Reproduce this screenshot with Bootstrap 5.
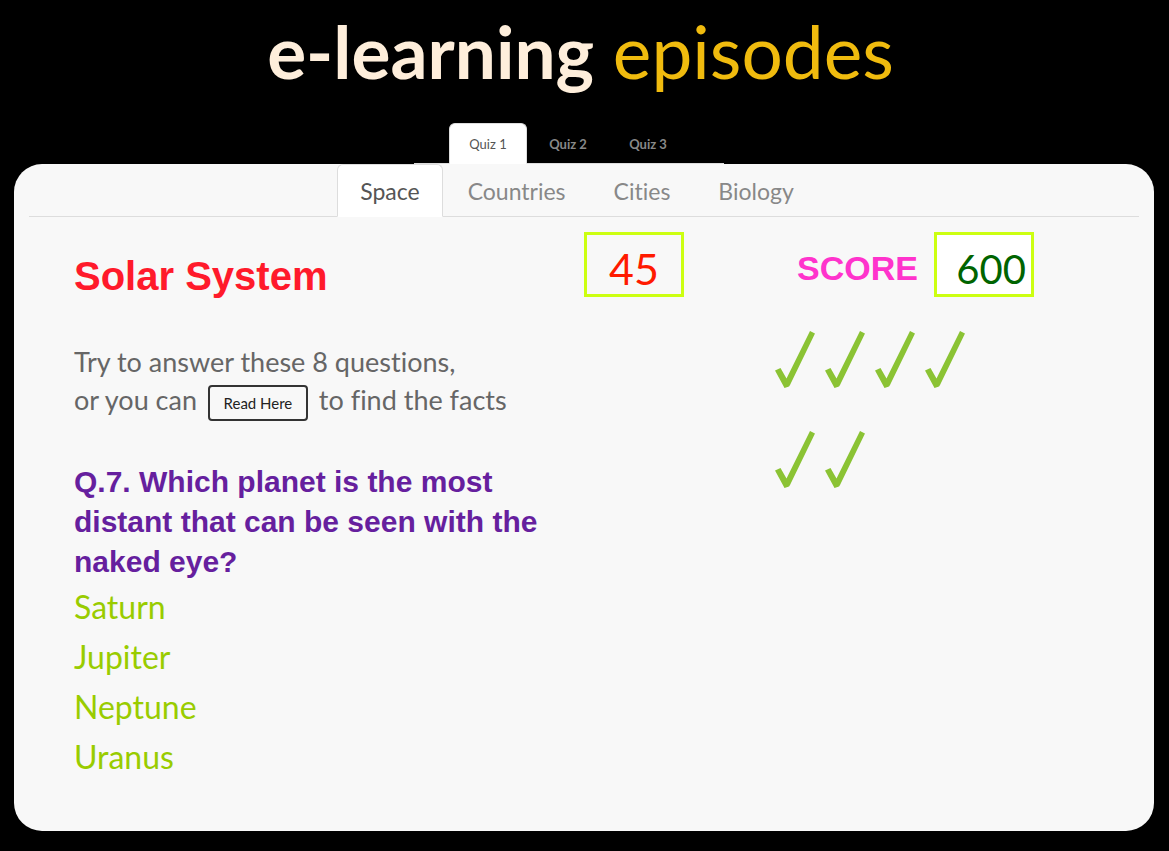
<!DOCTYPE html>
<html lang="en">
<head>
<meta charset="utf-8">
<meta name="viewport" content="width=device-width, initial-scale=1">
<title>e-learning episodes</title>
<link href="https://cdn.jsdelivr.net/npm/bootstrap@5.3.0/dist/css/bootstrap.min.css" rel="stylesheet">
<style>
  body { background: #000; color: #555; font-family: "Century Gothic", Lato, sans-serif; font-variant-ligatures: none; padding: 0 15px 20px 14px; }
  .site-title { font-size: 73px; line-height: 80px; font-weight: 400; color: #f0bb0e; padding: 11px 7px 0 0; margin: 0 0 32px; }
  .site-title strong { color: #feeedb; font-weight: 700; }
  .nav-tabs { border-color: #ddd; }
  .nav-tabs .nav-link { color: #888; }
  .nav-tabs .nav-link:hover { border-color: transparent; }
  .nav-tabs .nav-link.active { color: #555; background: #fff; border-color: #ddd #ddd #fff; }
  .quiz-line { padding-right: 30px; }
  .quiz-tabs { width: 310px; padding-left: 35px; gap: 2px; font-size: 13px; line-height: 20px; }
  .quiz-tabs .nav-link { width: 78px; padding: 10px 0 9px; text-align: center; font-weight: 700; }
  .quiz-tabs .nav-link.active { font-weight: 400; }
  .topic-tabs { gap: 2px; padding-right: 14px; font-size: 23px; line-height: 30px; }
  .topic-tabs .nav-link { padding: 11px 22px 10px; }
  .panel { background: #f8f8f8; border-radius: 28px; padding: 0 15px 49px; }
  .rounded-face { font-family: "Arial Rounded MT Bold", "Liberation Sans", sans-serif; font-weight: 700; }
  .lesson { padding-left: 45px; }
  .lesson h2 { font-size: 40px; line-height: 48px; color: #ff1a2b; margin: 35px 0 43px; }
  .intro { font-size: 27px; line-height: 38px; margin: 0 0 41px; color: #666; }
  .read-btn { width: 100px; height: 36px; padding: 0; margin: 0 4px; font-size: 15px; border: 2px solid #333; border-radius: 4px; color: #222; vertical-align: middle; }
  .lesson h3 { font-size: 30px; line-height: 40px; color: #661f9e; margin: 0; }
  .answers .btn { font-size: 32px; line-height: 50px; color: #99cc00; padding: 0; border: 0; }
  .side { padding-top: 15px; }
  .counter { width: 100px; height: 65px; border: 3px solid #ccff11; font-size: 43px; line-height: 59px; }
  .timer { color: #ff1a00; padding-top: 4px; }
  .score { color: #006400; background: #fff; font-size: 40px; text-align: right; padding: 9px 5px 0 0; outline: 0; }
  .score-label { font-size: 34px; color: #ff33cc; padding-top: 8px; }
  .tick-grid { display: grid; grid-template-columns: repeat(4, 50px); grid-auto-rows: 100px; }
</style>
</head>
<body>
<header>
  <h1 class="site-title text-center"><strong>e-learning</strong> episodes</h1>
  <nav class="quiz-line" aria-label="Quizzes">
    <ul class="nav nav-tabs quiz-tabs mx-auto">
      <li class="nav-item"><a class="nav-link active" href="#quiz1" aria-current="page">Quiz 1</a></li>
      <li class="nav-item"><a class="nav-link" href="#quiz2">Quiz 2</a></li>
      <li class="nav-item"><a class="nav-link" href="#quiz3">Quiz 3</a></li>
    </ul>
  </nav>
</header>
<main class="panel" id="quiz1">
  <ul class="nav nav-tabs topic-tabs justify-content-center">
    <li class="nav-item"><a class="nav-link active" href="#space" aria-current="page">Space</a></li>
    <li class="nav-item"><a class="nav-link" href="#countries">Countries</a></li>
    <li class="nav-item"><a class="nav-link" href="#cities">Cities</a></li>
    <li class="nav-item"><a class="nav-link" href="#biology">Biology</a></li>
  </ul>
  <div class="row g-0" id="space">
    <section class="col-6 lesson">
      <h2 class="rounded-face">Solar System</h2>
      <p class="intro">Try to answer these 8 questions,<br>or you can <button type="button" class="btn read-btn">Read Here</button> to find the facts</p>
      <h3 class="rounded-face">Q.7. Which planet is the most distant that can be seen with the naked eye?</h3>
      <div class="answers d-flex flex-column align-items-start">
        <button type="button" class="btn">Saturn</button>
        <button type="button" class="btn">Jupiter</button>
        <button type="button" class="btn">Neptune</button>
        <button type="button" class="btn">Uranus</button>
      </div>
    </section>
    <div class="col-2 side">
      <div class="counter timer text-center" role="timer">45</div>
    </div>
    <section class="col-4 side">
      <div class="d-flex align-items-center gap-3 ps-4 ms-1">
        <label class="score-label rounded-face" for="score">SCORE</label>
        <input class="counter score" id="score" type="text" value="600" readonly>
      </div>
      <svg width="0" height="0" class="d-block" aria-hidden="true">
        <symbol id="tick" viewBox="0 0 50 100"><path d="M6 41.500 11.500 39 17.500 49.500 41 2 46 4.500 21 56 20 57.500 15.500 59Z" fill="#8bc334"/></symbol>
      </svg>
      <div class="tick-grid pt-4 mt-2" role="img" aria-label="6 correct answers">
        <svg width="50" height="100"><use href="#tick"/></svg>
        <svg width="50" height="100"><use href="#tick"/></svg>
        <svg width="50" height="100"><use href="#tick"/></svg>
        <svg width="50" height="100"><use href="#tick"/></svg>
        <svg width="50" height="100"><use href="#tick"/></svg>
        <svg width="50" height="100"><use href="#tick"/></svg>
      </div>
    </section>
  </div>
</main>
<script src="https://cdn.jsdelivr.net/npm/bootstrap@5.3.0/dist/js/bootstrap.bundle.min.js"></script>
</body>
</html>
